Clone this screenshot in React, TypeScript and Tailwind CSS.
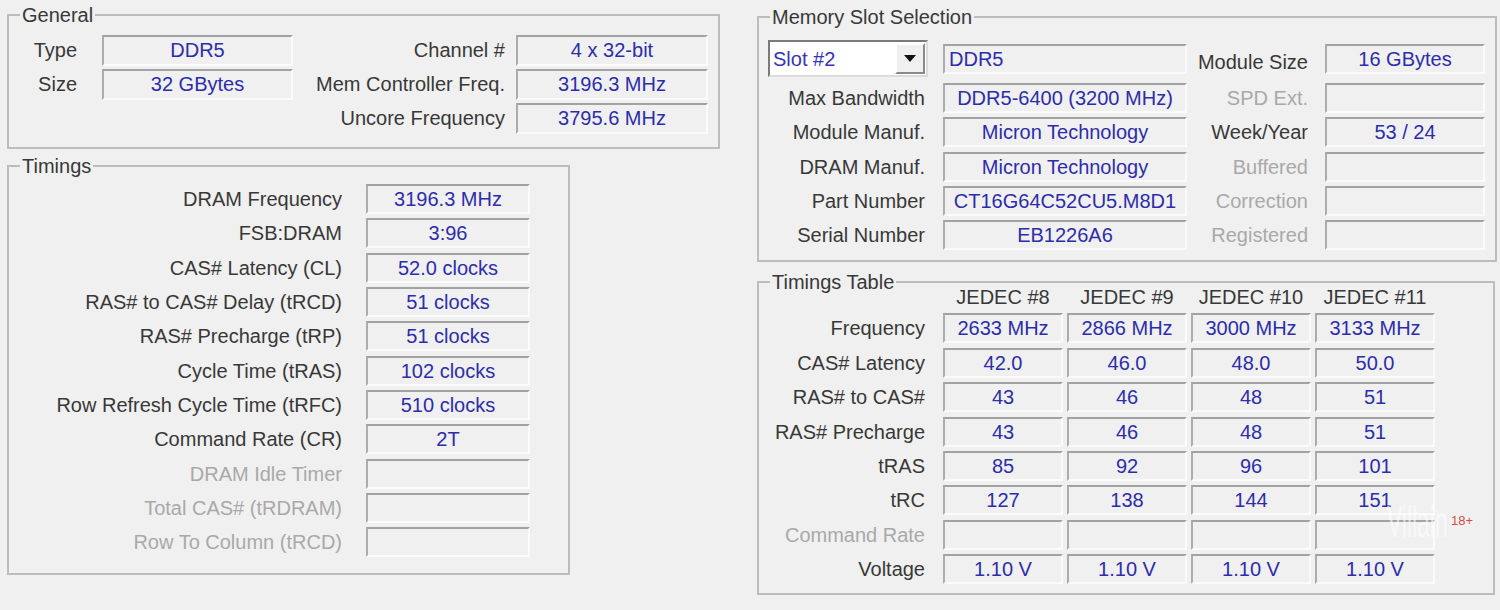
import React from 'react';

const BOX =
  'h-[30px] flex items-center justify-center border-2 border-t-[#a2a2a2] border-l-[#acacac] border-b-[#fbfbfb] border-r-[#fbfbfb] text-[#2d2daa] whitespace-nowrap';
const LABEL = 'text-right whitespace-nowrap text-[#383838]';
const DIM = 'text-right whitespace-nowrap text-[#a9a9a9]';

const Frame: React.FC<{ title: string; className?: string; children: React.ReactNode }> = ({
  title,
  className,
  children,
}) => (
  <fieldset className={`relative m-0 p-0 min-w-0 border-2 border-[#bdbdbd] ${className ?? ''}`}>
    <legend className="ml-[11px] px-[2px] leading-[24px] text-[#383838]">{title}</legend>
    {children}
  </fieldset>
);

const timings: [string, string, boolean][] = [
  ['DRAM Frequency', '3196.3 MHz', true],
  ['FSB:DRAM', '3:96', true],
  ['CAS# Latency (CL)', '52.0 clocks', true],
  ['RAS# to CAS# Delay (tRCD)', '51 clocks', true],
  ['RAS# Precharge (tRP)', '51 clocks', true],
  ['Cycle Time (tRAS)', '102 clocks', true],
  ['Row Refresh Cycle Time (tRFC)', '510 clocks', true],
  ['Command Rate (CR)', '2T', true],
  ['DRAM Idle Timer', '', false],
  ['Total CAS# (tRDRAM)', '', false],
  ['Row To Column (tRCD)', '', false],
];

// label, value, right label, right enabled, right value
const slotRows: [string, string, string, boolean, string][] = [
  ['Max Bandwidth', 'DDR5-6400 (3200 MHz)', 'SPD Ext.', false, ''],
  ['Module Manuf.', 'Micron Technology', 'Week/Year', true, '53 / 24'],
  ['DRAM Manuf.', 'Micron Technology', 'Buffered', false, ''],
  ['Part Number', 'CT16G64C52CU5.M8D1', 'Correction', false, ''],
  ['Serial Number', 'EB1226A6', 'Registered', false, ''],
];

const jedec: [string, string[], boolean][] = [
  ['Frequency', ['2633 MHz', '2866 MHz', '3000 MHz', '3133 MHz'], true],
  ['CAS# Latency', ['42.0', '46.0', '48.0', '50.0'], true],
  ['RAS# to CAS#', ['43', '46', '48', '51'], true],
  ['RAS# Precharge', ['43', '46', '48', '51'], true],
  ['tRAS', ['85', '92', '96', '101'], true],
  ['tRC', ['127', '138', '144', '151'], true],
  ['Command Rate', ['', '', '', ''], false],
  ['Voltage', ['1.10 V', '1.10 V', '1.10 V', '1.10 V'], true],
];

export default function App() {
  return (
    <div className="w-[1500px] h-[610px] overflow-hidden bg-[#f0f0f0] flex font-['Liberation_Sans',Arial,sans-serif] text-[20px] leading-[24px]">
      {/* Left column */}
      <div className="w-[750px] shrink-0 pl-[7px] pt-[3px] flex flex-col">
        <Frame title="General" className="w-[713px]">
          <div className="pt-[6px] pb-[12px] flex flex-col">
            <div className="h-[34px] flex items-center">
              <div className={`${LABEL} w-[68px]`}>Type</div>
              <div className={`${BOX} w-[191px] ml-[25px] h-[31px]`}>DDR5</div>
              <div className={`${LABEL} w-[212px]`}>Channel #</div>
              <div className={`${BOX} w-[192px] ml-[11px] h-[31px]`}>4 x 32-bit</div>
            </div>
            <div className="h-[34px] flex items-center">
              <div className={`${LABEL} w-[68px]`}>Size</div>
              <div className={`${BOX} w-[191px] ml-[25px] h-[31px]`}>32 GBytes</div>
              <div className={`${LABEL} w-[212px]`}>Mem Controller Freq.</div>
              <div className={`${BOX} w-[192px] ml-[11px] h-[31px]`}>3196.3 MHz</div>
            </div>
            <div className="h-[34px] flex items-center">
              <div className="w-[284px]" />
              <div className={`${LABEL} w-[212px]`}>Uncore Frequency</div>
              <div className={`${BOX} w-[192px] ml-[11px] h-[31px]`}>3795.6 MHz</div>
            </div>
          </div>
        </Frame>

        <Frame title="Timings" className="w-[563px] mt-[5px]">
          <div className="pt-[4px] pb-[14px] flex flex-col">
            {timings.map(([label, value, on]) => (
              <div key={label} className="h-[34.3px] flex items-center">
                <div className={`${on ? LABEL : DIM} w-[333px]`}>{label}</div>
                <div className={`${BOX} w-[164px] ml-[24px]`}>{value}</div>
              </div>
            ))}
          </div>
        </Frame>
      </div>

      {/* Right column */}
      <div className="flex-1 pl-[7px] pt-[5px] flex flex-col">
        <Frame title="Memory Slot Selection" className="w-[740px]">
          <div className="pt-[11px] pb-[8px] flex flex-col">
            <div className="h-[41px] flex items-start">
              <div className="ml-[9px] w-[160px] h-[37px] flex items-stretch bg-white border-2 border-t-[#7a7a7a] border-l-[#7a7a7a] border-b-[#dcdcdc] border-r-[#dcdcdc]">
                <div className="flex-1 flex items-center pl-[3px] text-[#3535b5]">Slot #2</div>
                <div className="w-[30px] my-[1px] mr-[1px] flex items-center justify-center bg-[#f0f0f0] border-2 border-t-[#ffffff] border-l-[#ffffff] border-b-[#8a8a8a] border-r-[#8a8a8a]">
                  <svg width="12" height="7" viewBox="0 0 12 7">
                    <path d="M0 0 H12 L6 7 Z" fill="#111" />
                  </svg>
                </div>
              </div>
              <div className={`${BOX} w-[244px] ml-[15px] mt-[4px] !justify-start pl-[4px]`}>DDR5</div>
              <div className={`${LABEL} w-[121px] mt-[10px]`}>Module Size</div>
              <div className={`${BOX} w-[160px] ml-[17px] mt-[4px]`}>16 GBytes</div>
            </div>
            {slotRows.map(([label, value, rlabel, ron, rvalue]) => (
              <div key={label} className="h-[34.25px] flex items-center">
                <div className={`${LABEL} w-[166px]`}>{label}</div>
                <div className={`${BOX} w-[244px] ml-[18px]`}>{value}</div>
                <div className={`${ron ? LABEL : DIM} w-[121px]`}>{rlabel}</div>
                <div className={`${BOX} w-[160px] ml-[17px]`}>{rvalue}</div>
              </div>
            ))}
          </div>
        </Frame>

        <Frame title="Timings Table" className="w-[738px] mt-[8px]">
          <div className="mt-[-11px] pb-[7px] flex flex-col">
            <div className="h-[28px] flex items-center">
              <div className="w-[184px]" />
              <div className="flex gap-[4px] text-[#383838]">
                {['JEDEC #8', 'JEDEC #9', 'JEDEC #10', 'JEDEC #11'].map((h) => (
                  <div key={h} className="w-[120px] text-center whitespace-nowrap">
                    {h}
                  </div>
                ))}
              </div>
            </div>
            {jedec.map(([label, vals, on]) => (
              <div key={label} className="h-[34.4px] flex items-center">
                <div className={`${on ? LABEL : DIM} w-[166px]`}>{label}</div>
                <div className="ml-[18px] flex gap-[4px]">
                  {vals.map((v, i) => (
                    <div key={i} className={`${BOX} w-[120px]`}>
                      {v}
                    </div>
                  ))}
                </div>
              </div>
            ))}
          </div>
          {/* watermark */}
          <div className="absolute left-[628px] top-[206px] text-[44px] leading-[44px] font-light text-white/60 scale-x-[0.52] origin-left pointer-events-none">
            Villain
          </div>
          <div className="absolute left-[692px] top-[220px] text-[13px] leading-[14px] text-[#d44a4a] pointer-events-none">
            18+
          </div>
        </Frame>
      </div>
    </div>
  );
}
